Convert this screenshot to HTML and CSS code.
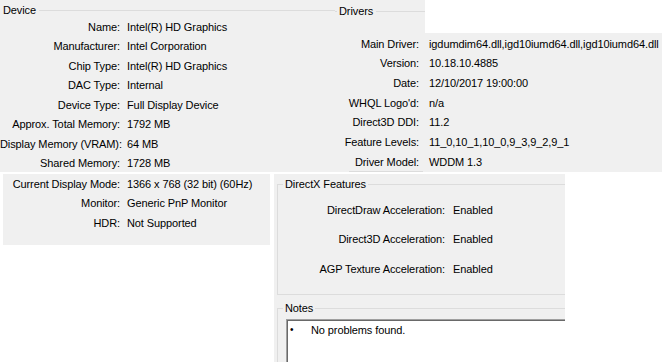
FILE: index.html
```html
<!DOCTYPE html>
<html>
<head>
<meta charset="utf-8">
<link rel="stylesheet" href="styles.css">
</head>
<body>
<div class="top">
  <section class="device">
    <div class="ghead"><span class="glabel">Device</span><span class="gline"></span></div>
    <div class="kv dev-grid">
      <span class="k">Name:</span><span class="v">Intel(R) HD Graphics</span>
      <span class="k">Manufacturer:</span><span class="v">Intel Corporation</span>
      <span class="k">Chip Type:</span><span class="v">Intel(R) HD Graphics</span>
      <span class="k">DAC Type:</span><span class="v">Internal</span>
      <span class="k">Device Type:</span><span class="v">Full Display Device</span>
      <span class="k">Approx. Total Memory:</span><span class="v">1792 MB</span>
      <span class="k">Display Memory (VRAM):</span><span class="v">64 MB</span>
      <span class="k">Shared Memory:</span><span class="v">1728 MB</span>
    </div>
  </section>
  <section class="drivers">
    <div class="drv-head">
      <div class="drv-tab">
        <span class="gline stub"></span><span class="glabel">Drivers</span><span class="gline"></span>
      </div>
    </div>
    <div class="drv-body">
      <div class="kv drv-grid">
        <span class="k">Main Driver:</span><span class="v">igdumdim64.dll,igd10iumd64.dll,igd10iumd64.dll</span>
        <span class="k">Version:</span><span class="v">10.18.10.4885</span>
        <span class="k">Date:</span><span class="v">12/10/2017 19:00:00</span>
        <span class="k">WHQL Logo'd:</span><span class="v">n/a</span>
        <span class="k">Direct3D DDI:</span><span class="v">11.2</span>
        <span class="k">Feature Levels:</span><span class="v">11_0,10_1,10_0,9_3,9_2,9_1</span>
        <span class="k">Driver Model:</span><span class="v">WDDM 1.3</span>
      </div>
      <div class="drv-foot"></div>
    </div>
  </section>
</div>
<div class="bottom">
  <section class="mode">
    <div class="kv mode-grid">
      <span class="k">Current Display Mode:</span><span class="v">1366 x 768 (32 bit) (60Hz)</span>
      <span class="k">Monitor:</span><span class="v">Generic PnP Monitor</span>
      <span class="k">HDR:</span><span class="v">Not Supported</span>
    </div>
  </section>
  <section class="features">
    <fieldset class="group dx">
      <legend>DirectX Features</legend>
      <div class="kv dx-grid">
        <span class="k">DirectDraw Acceleration:</span><span class="v">Enabled</span>
        <span class="k">Direct3D Acceleration:</span><span class="v">Enabled</span>
        <span class="k">AGP Texture Acceleration:</span><span class="v">Enabled</span>
      </div>
    </fieldset>
    <fieldset class="group notes">
      <legend>Notes</legend>
      <div class="listbox">
        <div class="note"><span class="bullet">•</span><span>No problems found.</span></div>
      </div>
    </fieldset>
  </section>
</div>
</body>
</html>
```

FILE: styles.css
```css
html, body {
  margin: 0;
  padding: 0;
  background: #ffffff;
}
body {
  width: 662px;
  height: 362px;
  overflow: hidden;
  font-family: "Liberation Sans", Arial, sans-serif;
  font-size: 11px;
  letter-spacing: -0.1px;
  color: #000;
}
.top {
  display: flex;
  height: 172px;
}
.device {
  width: 335px;
  background: #f0f0f0;
}
.ghead {
  display: flex;
  align-items: center;
  padding-top: 4px;
  padding-left: 3px;
  height: 13px;
  line-height: 13px;
}
.glabel {
  white-space: nowrap;
}
.gline {
  flex: 1;
  border-top: 1px solid #dcdcdc;
  margin-left: 3px;
}
.gline.stub {
  flex: 0 0 2px;
  margin-left: 0;
  margin-right: 2px;
}
.kv {
  display: grid;
  align-items: center;
  white-space: nowrap;
}
.k {
  text-align: right;
}
.dev-grid {
  grid-template-columns: 120px auto;
  column-gap: 7px;
  grid-auto-rows: 19.5px;
}
.drivers {
  flex: 1;
  display: flex;
  flex-direction: column;
}
.drv-head {
  height: 33px;
  display: flex;
}
.drv-tab {
  width: 90px;
  background: #f0f0f0;
  display: flex;
  align-items: center;
  height: 13px;
  line-height: 13px;
  padding-top: 5px;
  padding-bottom: 15px;
}
.drv-body {
  flex: 1;
  background: #f0f0f0;
  padding-top: 1px;
  overflow: hidden;
}
.drv-grid {
  grid-template-columns: 84px auto;
  column-gap: 10px;
  grid-auto-rows: 19.65px;
}
.drv-foot {
  margin-left: 14px;
  width: 74px;
  border-top: 1px solid #dcdcdc;
}
.bottom {
  display: flex;
  align-items: flex-start;
  margin-top: 2px;
  padding-left: 3px;
  gap: 4px;
}
.mode {
  width: 267px;
  height: 71px;
  background: #f0f0f0;
}
.mode-grid {
  grid-template-columns: 117px auto;
  column-gap: 7px;
  grid-auto-rows: 19.5px;
}
.features {
  width: 288px;
  height: 184px;
  padding: 4px 0 0 3px;
  background: #f0f0f0;
  overflow: hidden;
}
.group {
  margin: 0;
  padding: 0;
  border: 1px solid #dcdcdc;
  width: 400px;
  min-inline-size: 0;
}
.group legend {
  padding: 0 2px;
  margin-left: 5px;
  line-height: 13px;
}
.dx {
  height: 117px;
  box-sizing: border-box;
  padding-top: 4px;
}
.dx-grid {
  grid-template-columns: 167px auto;
  column-gap: 8px;
  grid-auto-rows: 29.5px;
}
.notes {
  margin-top: 7px;
  height: 80px;
}
.listbox {
  margin: 4px 0 0 8px;
  height: 70px;
  background: #ffffff;
  border-top: 1px solid #a0a0a0;
  border-left: 1px solid #a0a0a0;
  box-shadow: inset 1px 1px 0 #696969;
  padding: 2px 0 0 3px;
}
.note {
  display: flex;
  align-items: center;
  height: 15px;
}
.bullet {
  width: 21px;
  font-size: 10px;
}
```
